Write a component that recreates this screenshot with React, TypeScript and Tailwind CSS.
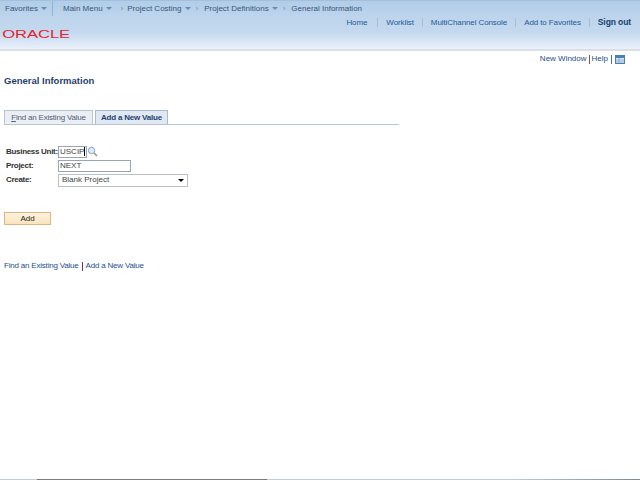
const crumbs = ["Project Costing", "Project Definitions"];

function Caret() {
  return <span className="ml-[3px] inline-block w-0 h-0 border-x-[3px] border-x-transparent border-t-[3px] border-t-[#6f89a8]" />;
}

function Sep() {
  return <span className="h-[9px] w-px bg-[#a9bfd6]" />;
}

function TopBar() {
  return (
    <div className="h-[16px] shrink-0 flex items-center border-t border-[#a4c0dc] bg-gradient-to-b from-[#b0cde9] to-[#bdd4ec] text-[8px] text-[#3a5676]">
      <div className="w-[53px] h-full pl-[5px] flex items-center border-r border-[#8fb2d6]">
        Favorites<Caret />
      </div>
      <div className="ml-[10px] flex items-center">
        Main Menu<Caret />
      </div>
      <span className="ml-[9px] mr-[4px] text-[#6f89a8]">›</span>
      {crumbs.map((c) => (
        <div key={c} className="flex items-center">
          {c}<Caret />
          <span className="ml-[5px] mr-[6px] text-[#6f89a8]">›</span>
        </div>
      ))}
      <span>General Information</span>
    </div>
  );
}

function Header() {
  return (
    <div className="h-[35px] shrink-0 flex justify-between border-b-2 border-[#dcdfe8] bg-gradient-to-b from-[#bdd4ec] via-[#c4d9ef] to-[#eaf1fa]">
      <div className="pt-[12px] pl-[1.5px] h-fit text-[11px] leading-[12px] text-[#e8222c] origin-left scale-x-[1.5]">ORACLE</div>
      <div className="h-[13px] pr-[9px] flex items-center gap-[8px] text-[8px] tracking-[-0.1px] text-[#1f5a96]">
        <span className="mr-[2px]">Home</span>
        <Sep />
        <span>Worklist</span>
        <Sep />
        <span>MultiChannel Console</span>
        <Sep />
        <span>Add to Favorites</span>
        <Sep />
        <span className="text-[8.5px] font-bold text-[#163e70]">Sign out</span>
      </div>
    </div>
  );
}

function Field({ label, h, children }: { label: string; h: string; children: React.ReactNode }) {
  return (
    <div className={`flex items-center ${h}`}>
      <span className="w-[52px] shrink-0 text-[8px] font-bold tracking-[-0.3px] text-[#333] whitespace-nowrap">{label}</span>
      {children}
    </div>
  );
}

export default function App() {
  return (
    <div className="w-[640px] h-[480px] flex flex-col bg-white overflow-hidden font-['Liberation_Sans',Arial,sans-serif]">
      <TopBar />
      <Header />

      <div className="h-[14px] mt-[1px] pr-[15px] flex items-center justify-end text-[8px] text-[#1f4f8c]">
        <span>New Window</span>
        <span className="mx-[2px] h-[9px] w-px bg-[#a0522d]" />
        <span>Help</span>
        <span className="mx-[3px] h-[9px] w-px bg-[#3f6fa8]" />
        <svg width="10" height="9" viewBox="0 0 10 9">
          <rect x="0.5" y="0.5" width="9" height="8" fill="#dce8f5" stroke="#4a7fb8" />
          <rect x="1" y="1" width="8" height="2" fill="#4a7fb8" />
          <path d="M1 5h8M1 7h8M4 3v5" stroke="#8fb2d6" />
        </svg>
      </div>

      <h1 className="mt-[8px] ml-[4px] text-[9.5px] leading-[13px] font-bold text-[#1f3f6e]">General Information</h1>

      <div className="mt-[23px] ml-[4px] w-[395px] h-[15px] flex items-end gap-[2px] border-b border-[#b9c5d3] text-[8px] tracking-[-0.2px]">
        <div className="w-[89px] h-[14px] flex items-center justify-center border border-[#b9c5d3] border-b-0 bg-[#ebeff5] text-[#4d6178]">
          <span><span className="underline">F</span>ind an Existing Value</span>
        </div>
        <div className="w-[73px] h-[14px] flex items-center justify-center border border-[#a9bbd0] border-b-0 bg-[#dfe8f3] font-bold text-[#1f3f6e]">
          Add a New Value
        </div>
      </div>

      <div className="mt-[19px] ml-[6px] flex flex-col text-[8px] text-[#333]">
        <Field label="Business Unit:" h="h-[15px]">
          <span className="w-[29px] h-[12px] flex items-center pl-[1px] border border-[#9aa5b3] text-[#444]">
            USCIP<span className="h-[9px] w-px bg-black" />
          </span>
          <svg width="11" height="11" viewBox="0 0 11 11">
            <circle cx="4.5" cy="4.5" r="3.2" fill="#dcebf8" stroke="#7fa8cc" />
            <path d="M7 7l3 3" stroke="#a8966a" strokeWidth="1.6" />
          </svg>
        </Field>
        <Field label="Project:" h="h-[14px]">
          <span className="w-[73px] h-[12px] flex items-center pl-[1px] border border-[#9aa5b3] text-[#444]">NEXT</span>
        </Field>
        <Field label="Create:" h="h-[14px]">
          <span className="w-[130px] h-[13px] flex items-center justify-between pl-[3px] pr-[3px] border border-[#b9c0ca] text-[#444]">
            Blank Project
            <span className="w-0 h-0 border-x-[3px] border-x-transparent border-t-[3px] border-t-black" />
          </span>
        </Field>
      </div>

      <button className="mt-[25px] ml-[4px] w-[47px] h-[13px] flex items-center justify-center border border-[#e3b57e] bg-gradient-to-b from-[#fdf3df] to-[#f9e3bd] text-[8px] text-[#222]">
        Add
      </button>

      <div className="mt-[35px] ml-[4px] h-[12px] flex items-center text-[8px] tracking-[-0.2px] text-[#1f4f8c]">
        <span>Find an Existing Value</span>
        <span className="mx-[3px] h-[9px] w-px bg-[#8b2a3a]" />
        <span>Add a New Value</span>
      </div>

      <div className="mt-auto h-px flex shrink-0 bg-[#c0ced9]">
        <span className="ml-[37px] w-[230px] bg-[#7a7a7a]" />
        <span className="ml-[243px] w-[130px] bg-gradient-to-r from-[#c0ced9] to-[#7f8a90]" />
      </div>
    </div>
  );
}
